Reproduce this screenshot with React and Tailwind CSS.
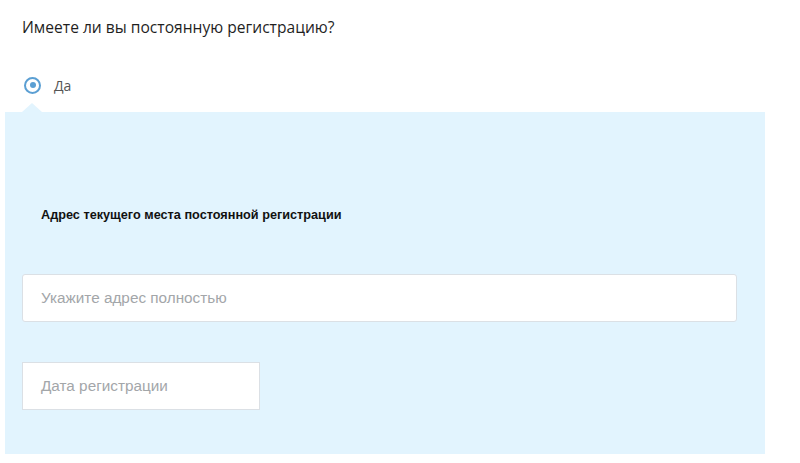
export default function App() {
  return (
    <div className="w-[800px] h-[463px] bg-white overflow-hidden">
      <div className="pt-[15px] pl-[22px] text-[15.6px] leading-[24px] text-[#1f1f1f]" style={{ fontFamily: '"Open Sans", sans-serif' }}>
        Имеете ли вы постоянную регистрацию?
      </div>
      <div className="mt-[37px] ml-[24px] flex items-center h-[18px]">
        <span className="w-[17px] h-[17px] rounded-full border-[2.5px] border-[#5b9fd3] flex items-center justify-center">
          <span className="w-[6px] h-[6px] rounded-full bg-[#5b9fd3]" />
        </span>
        <span className="ml-[13px] text-[14px] text-[#555]" style={{ fontFamily: '"Open Sans", sans-serif' }}>Да</span>
      </div>
      <div className="relative mt-[18px] ml-[5px] w-[760px] bg-[#e2f4fe] pt-[96px] pb-[44px] pl-[17px]" style={{ fontFamily: '"Liberation Sans", Arial, sans-serif' }}>
        <div className="absolute top-[-9px] left-[17px] w-0 h-0 border-l-[10px] border-r-[10px] border-b-[9px] border-l-transparent border-r-transparent border-b-[#e2f4fe]" />
        <div className="pl-[19px] text-[12.7px] leading-[14px] font-bold text-[#111]">
          Адрес текущего места постоянной регистрации
        </div>
        <div className="mt-[52px] w-[715px] h-[48px] bg-white border border-[#dbe0e5] rounded-[3px] flex items-center pl-[18px] text-[15.3px] text-[#a3a6a9]">
          Укажите адрес полностью
        </div>
        <div className="mt-[40px] w-[238px] h-[48px] bg-white border border-[#dbe0e5] flex items-center pl-[18px] text-[15.3px] text-[#a3a6a9]">
          Дата регистрации
        </div>
      </div>
    </div>
  );
}
